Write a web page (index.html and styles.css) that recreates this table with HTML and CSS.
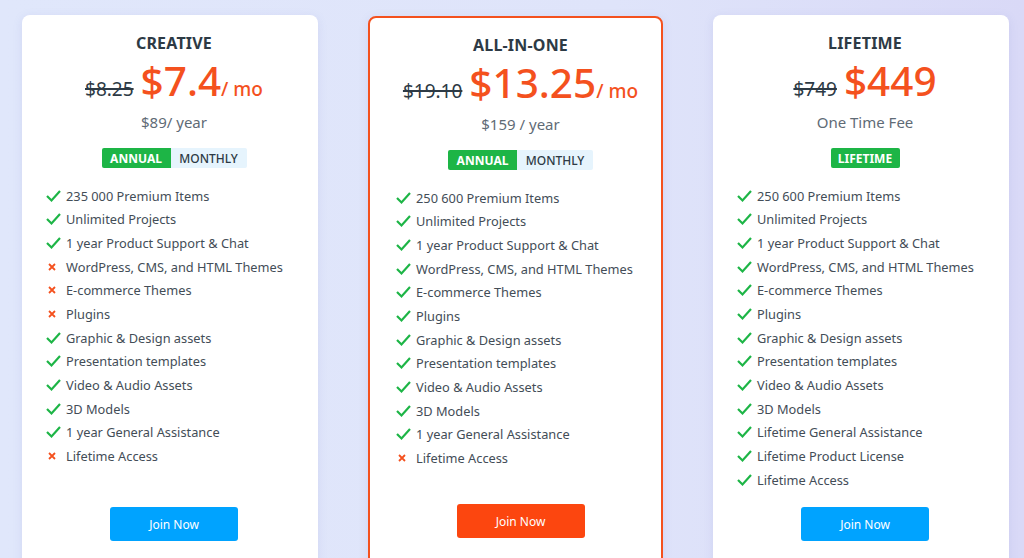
FILE: index.html
```html
<!DOCTYPE html>
<html>
<head>
<meta charset="utf-8">
<link rel="stylesheet" href="styles.css">
</head>
<body>
<div class="plans">
  <div class="card">
    <h2 class="title">CREATIVE</h2>
    <div class="price"><span class="old">$8.25</span><span class="new">$7.4</span><span class="per">/ mo</span></div>
    <div class="sub">$89/ year</div>
    <div class="toggle"><span class="opt on">ANNUAL</span><span class="opt">MONTHLY</span></div>
    <ul class="features">
      <li class="yes"><i></i>235 000 Premium Items</li>
      <li class="yes"><i></i>Unlimited Projects</li>
      <li class="yes"><i></i>1 year Product Support &amp; Chat</li>
      <li class="no"><i></i>WordPress, CMS, and HTML Themes</li>
      <li class="no"><i></i>E-commerce Themes</li>
      <li class="no"><i></i>Plugins</li>
      <li class="yes"><i></i>Graphic &amp; Design assets</li>
      <li class="yes"><i></i>Presentation templates</li>
      <li class="yes"><i></i>Video &amp; Audio Assets</li>
      <li class="yes"><i></i>3D Models</li>
      <li class="yes"><i></i>1 year General Assistance</li>
      <li class="no"><i></i>Lifetime Access</li>
    </ul>
    <a class="btn blue">Join Now</a>
  </div>
  <div class="card featured">
    <h2 class="title">ALL-IN-ONE</h2>
    <div class="price"><span class="old">$19.10</span><span class="new">$13.25</span><span class="per">/ mo</span></div>
    <div class="sub">$159 / year</div>
    <div class="toggle"><span class="opt on">ANNUAL</span><span class="opt">MONTHLY</span></div>
    <ul class="features">
      <li class="yes"><i></i>250 600 Premium Items</li>
      <li class="yes"><i></i>Unlimited Projects</li>
      <li class="yes"><i></i>1 year Product Support &amp; Chat</li>
      <li class="yes"><i></i>WordPress, CMS, and HTML Themes</li>
      <li class="yes"><i></i>E-commerce Themes</li>
      <li class="yes"><i></i>Plugins</li>
      <li class="yes"><i></i>Graphic &amp; Design assets</li>
      <li class="yes"><i></i>Presentation templates</li>
      <li class="yes"><i></i>Video &amp; Audio Assets</li>
      <li class="yes"><i></i>3D Models</li>
      <li class="yes"><i></i>1 year General Assistance</li>
      <li class="no"><i></i>Lifetime Access</li>
    </ul>
    <a class="btn orange">Join Now</a>
  </div>
  <div class="card">
    <h2 class="title">LIFETIME</h2>
    <div class="price"><span class="old">$749</span><span class="new">$449</span></div>
    <div class="sub">One Time Fee</div>
    <div class="toggle"><span class="opt on">LIFETIME</span></div>
    <ul class="features">
      <li class="yes"><i></i>250 600 Premium Items</li>
      <li class="yes"><i></i>Unlimited Projects</li>
      <li class="yes"><i></i>1 year Product Support &amp; Chat</li>
      <li class="yes"><i></i>WordPress, CMS, and HTML Themes</li>
      <li class="yes"><i></i>E-commerce Themes</li>
      <li class="yes"><i></i>Plugins</li>
      <li class="yes"><i></i>Graphic &amp; Design assets</li>
      <li class="yes"><i></i>Presentation templates</li>
      <li class="yes"><i></i>Video &amp; Audio Assets</li>
      <li class="yes"><i></i>3D Models</li>
      <li class="yes"><i></i>Lifetime General Assistance</li>
      <li class="yes"><i></i>Lifetime Product License</li>
      <li class="yes"><i></i>Lifetime Access</li>
    </ul>
    <a class="btn blue">Join Now</a>
  </div>
</div>
</body>
</html>
```

FILE: styles.css
```css
* { box-sizing: border-box; }
html, body { height: 100%; }
body {
  margin: 0;
  overflow: hidden;
  font-family: "Noto Sans", "Open Sans", sans-serif;
  background: linear-gradient(90deg, #e0e7fb 0%, #dfe4fa 60%, #d9d9f7 100%);
  color: #3d4852;
}
.plans {
  display: flex;
  align-items: flex-start;
  gap: 50px;
  padding: 15px 0 0 22px;
}
.card {
  width: 296px;
  height: 558px;
  background: #fff;
  border-radius: 8px;
  box-shadow: 0 2px 10px rgba(120, 130, 200, 0.15);
  display: flex;
  flex-direction: column;
  align-items: center;
  padding: 18px 0 32px 8px;
}
.card.featured {
  width: 295px;
  border: 2px solid #f4511e;
  margin-top: 1px;
  padding: 17px 0 34px 10px;
}
.title {
  margin: 0;
  font-size: 16px;
  line-height: 20px;
  font-weight: 700;
  color: #2d3a45;
  letter-spacing: 0.2px;
}
.price {
  display: flex;
  align-items: baseline;
  justify-content: center;
  margin-top: 2px;
  height: 52px;
}
.old {
  font-size: 19px;
  color: #2d3a45;
  text-decoration: line-through;
  text-decoration-thickness: 1.5px;
  margin-right: 7px;
}
.new {
  font-size: 40.5px;
  color: #f4511e;
  font-weight: 500;
  line-height: 52px;
}
.per {
  font-size: 19px;
  color: #f4511e;
  font-weight: 500;
}
.sub {
  margin-top: 5px;
  font-size: 15px;
  line-height: 20px;
  color: #5f6b76;
}
.toggle {
  display: flex;
  margin-top: 16px;
  border-radius: 2px;
  overflow: hidden;
  height: 20px;
}
.opt {
  display: flex;
  align-items: center;
  justify-content: center;
  font-size: 12px;
  font-weight: 500;
  background: #e6f4fd;
  color: #2d3a45;
  width: 76px;
}
.opt.on {
  background: #1db546;
  color: #fff;
  font-weight: 700;
  width: 69px;
}
.features {
  list-style: none;
  margin: 16px 0 0;
  padding: 0 0 0 16px;
  align-self: stretch;
}
.features li {
  display: flex;
  align-items: center;
  height: 23.65px;
  font-size: 12.8px;
  color: #434d57;
}
.features i {
  width: 20px;
  height: 14px;
  flex: none;
  background-repeat: no-repeat;
}
.features li.yes i {
  background-image: url("data:image/svg+xml;utf8,<svg xmlns='http://www.w3.org/2000/svg' width='20' height='14'><polyline points='1,7 5.5,11.5 14,2' fill='none' stroke='%231db546' stroke-width='2.2'/></svg>");
}
.features li.no i {
  background-image: url("data:image/svg+xml;utf8,<svg xmlns='http://www.w3.org/2000/svg' width='20' height='14'><path d='M3,4 L9,10 M9,4 L3,10' stroke='%23f4511e' stroke-width='1.8'/></svg>");
}
.featured .features { padding-left: 16px; }
.btn {
  margin-top: auto;
  width: 128px;
  height: 34px;
  border-radius: 3px;
  display: flex;
  align-items: center;
  justify-content: center;
  font-size: 12px;
  color: #fff;
}
.btn.blue { background: #00a3ff; }
.btn.orange { background: #fc460f; }
```
